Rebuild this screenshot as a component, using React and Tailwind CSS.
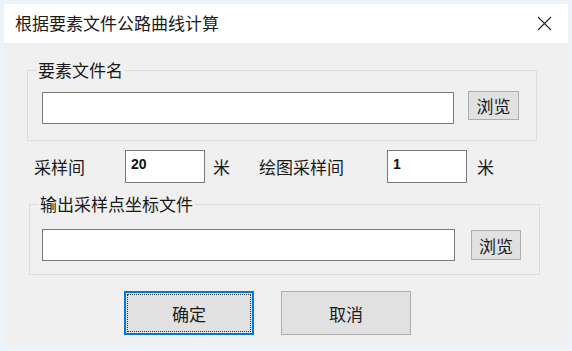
import React from 'react';

const font = { fontFamily: '"Noto Sans CJK SC", "Microsoft YaHei", sans-serif' };
const numFont = { fontFamily: '"Liberation Sans", Arial, sans-serif' };

function CloseIcon() {
  return (
    <svg width="15" height="15" viewBox="0 0 15 15" fill="none">
      <path d="M1 1 L14 14 M14 1 L1 14" stroke="#2b2b2b" strokeWidth="1.2" />
    </svg>
  );
}

function BrowseButton({ w, h }) {
  return (
    <button
      className={`flex shrink-0 items-center justify-center border border-[#adadad] bg-[#e1e1e1] text-[17px] leading-none text-[#1a1a1a] ${w} ${h}`}
    >
      浏览
    </button>
  );
}

export default function App() {
  return (
    <div className="h-[351px] w-[572px] bg-[#edf3fa] pt-[4px] pl-[4px]" style={font}>
      <div className="h-[344px] w-[564px] bg-[#f0f0f0]">
        {/* Title bar */}
        <div className="flex h-[39px] items-center justify-between bg-white pl-[11px] pr-[16px] pb-[1px]">
          <span className="text-[17px] leading-[20px] text-[#1b1b1b]">根据要素文件公路曲线计算</span>
          <CloseIcon />
        </div>

        <div className="flex flex-col">
          {/* Group 1 */}
          <fieldset className="mt-[17px] ml-[23px] w-[510px] border border-[#dcdcdc]">
            <legend className="ml-[8px] px-[2px] text-[17px] leading-[20px] text-[#1a1a1a]">要素文件名</legend>
            <div className="flex items-start pt-[12px] pb-[16px] pl-[14px]">
              <div className="h-[32px] w-[412px] border border-[#7a7a7a] bg-white" />
              <div className="ml-[14px] -mt-[1px]">
                <BrowseButton w="w-[51px]" h="h-[29px]" />
              </div>
            </div>
          </fieldset>

          {/* Sampling row */}
          <div className="mt-[9px] flex h-[33px] items-center pl-[30px] text-[17px] leading-[20px] text-[#1a1a1a]">
            <span className="w-[91px]">采样间</span>
            <div className="h-[33px] w-[80px] border border-[#7a7a7a] bg-white pt-[5px] pl-[5px] text-[14px] font-semibold leading-[16px] text-[#111]" style={numFont}>
              20
            </div>
            <span className="ml-[8px] w-[46px]">米</span>
            <span className="w-[128px]">绘图采样间</span>
            <div className="h-[33px] w-[80px] border border-[#7a7a7a] bg-white pt-[5px] pl-[5px] text-[14px] font-semibold leading-[16px] text-[#111]" style={numFont}>
              1
            </div>
            <span className="ml-[10px]">米</span>
          </div>

          {/* Group 2 */}
          <fieldset className="mt-[11px] ml-[25px] w-[511px] border border-[#dcdcdc]">
            <legend className="ml-[8px] px-[2px] text-[17px] leading-[20px] text-[#1a1a1a]">输出采样点坐标文件</legend>
            <div className="flex items-start pt-[15px] pb-[13px] pl-[12px]">
              <div className="h-[32px] w-[413px] border border-[#7a7a7a] bg-white" />
              <div className="ml-[16px] mt-[1px]">
                <BrowseButton w="w-[50px]" h="h-[30px]" />
              </div>
            </div>
          </fieldset>

          {/* Action buttons */}
          <div className="mt-[16px] flex pl-[120px]">
            <button className="h-[44px] w-[130px] border-2 border-[#0078d7] bg-[#e1e1e1] p-[1px]">
              <div className="flex h-full w-full items-center justify-center border border-dotted border-[#333] text-[17px] leading-none text-[#1a1a1a]">
                确定
              </div>
            </button>
            <button className="ml-[27px] flex h-[44px] w-[130px] items-center justify-center border border-[#adadad] bg-[#e1e1e1] text-[17px] leading-none text-[#1a1a1a]">
              取消
            </button>
          </div>
        </div>
      </div>
    </div>
  );
}
